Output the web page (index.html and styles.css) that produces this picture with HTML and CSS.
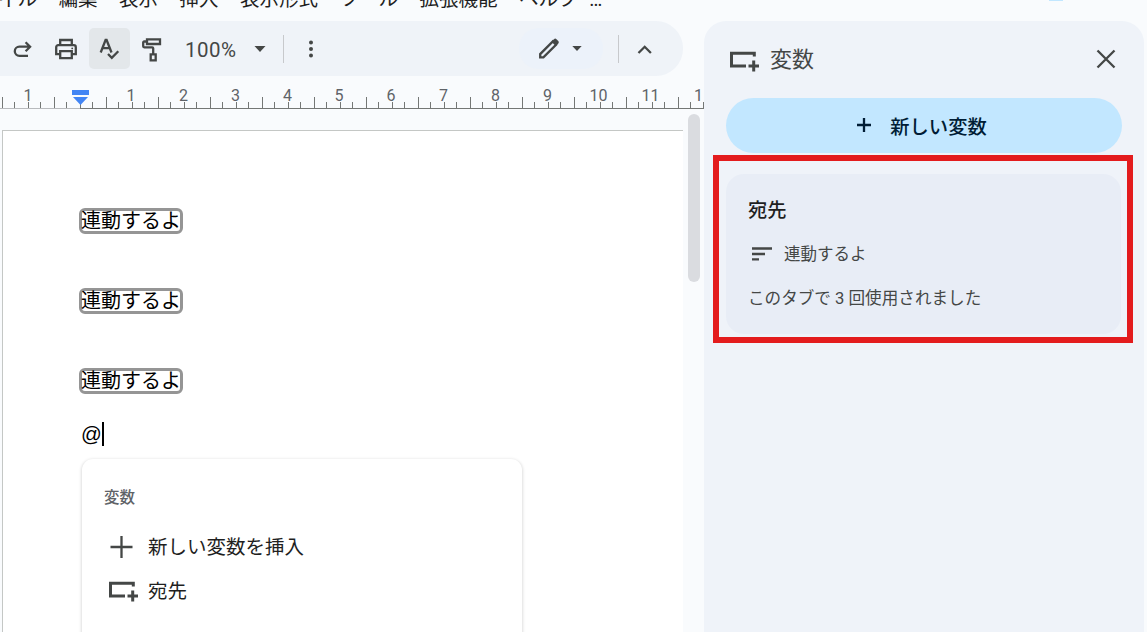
FILE: index.html
```html
<!DOCTYPE html>
<html lang="ja">
<head>
    <meta charset="UTF-8">
    <title>変数</title>
    <link rel="stylesheet" href="styles.css">
</head>
<body>
    <div class="editor">
        <div class="menubar">
            <span>ファイル</span>
            <span>編集</span>
            <span>表示</span>
            <span>挿入</span>
            <span>表示形式</span>
            <span>ツール</span>
            <span>拡張機能</span>
            <span>ヘルプ</span>
            <span class="more">…</span>
        </div>

        <div class="toolbar">
            <svg class="redo" width="20" height="20" viewBox="0 0 20 20">
                <path d="M17 6.700H6.400a4.600 4.600 0 0 0 0 9.200H15M12.600 2.200l4.500 4.500-4.500 4.500"/>
            </svg>
            <svg class="print" width="24" height="24" viewBox="0 0 24 24">
                <path d="M6.200 8V3h11.600v5M6 17.200H2.200v-7a2 2 0 0 1 2-2h15.600a2 2 0 0 1 2 2v7H18M6.200 14.200h11.600v7H6.200z"/>
                <circle class="dot" cx="18.200" cy="11.400" r="0.900"/>
            </svg>
            <div class="spell">
                <svg width="24" height="24" viewBox="0 0 24 24">
                    <path d="M3.700 15.500L8.600 3h1l4.900 12.500M5.500 11.200h7.200M11 17l3.800 3.800 6.500-6.500"/>
                </svg>
            </div>
            <svg class="paint" width="22" height="26" viewBox="0 0 22 26">
                <path d="M6 3.300h13V8H6zM6 5.500H3.200a1 1 0 0 0-1 1V10.300a1 1 0 0 0 1 1H11.200a1 1 0 0 1 1 1V18M9.700 18.300h5v6h-5z"/>
            </svg>
            <span class="zoom">100%</span>
            <svg class="caret" width="12" height="6" viewBox="0 0 12 6"><path d="M0.500 0h11L6 6z"/></svg>
            <span class="divider"></span>
            <svg class="dots" width="6" height="18" viewBox="0 0 6 18">
                <circle cx="3" cy="2.500" r="2"/>
                <circle cx="3" cy="9" r="2"/>
                <circle cx="3" cy="15.500" r="2"/>
            </svg>
            <div class="mode">
                <svg class="pencil" width="22" height="22" viewBox="0 0 22 22">
                    <path d="M2.200 19.300v-3.200L14.800 3.500l3.200 3.200L5.400 19.300z"/>
                    <path class="tip" d="M14 3.200l2-2a1.700 1.700 0 0 1 2.400 0l1.900 1.900a1.700 1.700 0 0 1 0 2.400l-2 2z"/>
                </svg>
                <svg class="caret" width="10" height="5" viewBox="0 0 10 5"><path d="M0.300 0h9.400L5 5z"/></svg>
            </div>
            <span class="divider"></span>
            <svg class="collapse" width="16" height="10" viewBox="0 0 16 10"><path d="M1.500 9L7.700 2.800 13.900 9"/></svg>
        </div>

        <svg class="ruler" width="704" height="33" viewBox="0 0 704 33">
            <defs>
                <pattern id="ticks" x="2" y="0" width="52" height="33" patternUnits="userSpaceOnUse">
                    <rect x="0" y="21" width="1" height="11"/>
                    <rect x="12" y="26" width="1" height="6"/>
                    <rect x="26" y="26" width="1" height="6"/>
                    <rect x="38" y="26" width="1" height="6"/>
                </pattern>
            </defs>
            <rect class="ticks" x="0" y="0" width="700" height="32"/>
            <rect class="margin-line" x="0" y="32" width="80" height="1"/>
            <rect x="80" y="32" width="624" height="1"/>
            <rect x="703" y="26" width="1" height="6"/>
            <text x="28" y="25">1</text>
            <text x="131" y="25">1</text>
            <text x="183.500" y="25">2</text>
            <text x="235.500" y="25">3</text>
            <text x="287.500" y="25">4</text>
            <text x="339" y="25">5</text>
            <text x="391" y="25">6</text>
            <text x="443.500" y="25">7</text>
            <text x="495.500" y="25">8</text>
            <text x="547.500" y="25">9</text>
            <text x="598.500" y="25">10</text>
            <text x="650.500" y="25">11</text>
            <text x="698.500" y="25">1</text>
            <path class="marker" d="M72 14h17v5H72zM73 21h15l-7.500 8z"/>
        </svg>

        <div class="canvas">
            <div class="page">
                <p><span class="chip">連動するよ</span></p>
                <p><span class="chip">連動するよ</span></p>
                <p><span class="chip">連動するよ</span></p>
                <div class="typing">@<span class="cursor"></span></div>
                <div class="popup">
                    <h4>変数</h4>
                    <div class="item">
                        <svg width="30" height="24" viewBox="0 0 30 24"><path d="M1.500 12h22M12.500 1v22"/></svg>
                        <span>新しい変数を挿入</span>
                    </div>
                    <div class="item">
                        <svg class="var-icon" width="30" height="24" viewBox="0 0 30 24"><path d="M24.300 8.500V5.200H1.500V18H16M18.500 18h10.500M23.700 12.500v11"/></svg>
                        <span>宛先</span>
                    </div>
                </div>
            </div>
            <div class="scrollbar"></div>
        </div>
    </div>

    <div class="side">
        <div class="avatar"></div>
        <div class="panel">
            <div class="panel-head">
                <svg class="var-icon" width="30" height="24" viewBox="0 0 30 24"><path d="M24.300 8.500V5.200H1.500V18H16M18.500 18h10.500M23.700 12.500v11"/></svg>
                <h2>変数</h2>
                <svg class="close" width="20" height="20" viewBox="0 0 20 20"><path d="M1.500 1.500l17 17M18.500 1.500l-17 17"/></svg>
            </div>
            <button class="new-var">
                <svg width="14" height="14" viewBox="0 0 14 14"><path d="M0 7h14M7 0v14"/></svg>
                新しい変数
            </button>
            <div class="highlight">
                <div class="card">
                    <h3>宛先</h3>
                    <div class="value">
                        <svg width="20" height="14" viewBox="0 0 20 14"><path d="M0 1.500h20M0 7h13M0 12.300h7"/></svg>
                        <span>連動するよ</span>
                    </div>
                    <div class="usage">このタブで 3 回使用されました</div>
                </div>
            </div>
        </div>
    </div>
</body>
</html>
```
FILE: styles.css
```css
* {
    box-sizing: border-box;
}
body {
    display: flex;
    margin: 0;
    height: 632px;
    overflow: hidden;
    background-color: #f9fbfd;
    font-family: Roboto, "Noto Sans CJK JP", sans-serif;
    color: #1f1f1f;
}
svg {
    flex: none;
    fill: none;
    stroke: #444746;
    stroke-width: 2.3;
}
h2, h3, h4, p {
    margin: 0;
    font-weight: 400;
}
.editor {
    display: flex;
    flex-direction: column;
    width: 704px;
    height: 632px;
    overflow: hidden;
}
.menubar {
    display: flex;
    align-items: flex-end;
    gap: 21.5px;
    height: 21px;
    margin-left: -41px;
    padding-bottom: 7px;
    overflow: hidden;
    font-size: 19.5px;
    line-height: 28px;
    white-space: nowrap;
    flex: none;
}
.menubar .more {
    margin-left: -10px;
}

/* toolbar */
.toolbar {
    display: flex;
    align-items: center;
    flex: none;
    width: 683px;
    height: 55px;
    padding-left: 13px;
    background-color: #eff3f8;
    border-radius: 0 27px 27px 0;
}
.redo {
    margin-top: 3px;
}
.print {
    margin-left: 21px;
}
.print .dot {
    fill: #444746;
    stroke: none;
}
.spell {
    display: flex;
    align-items: center;
    justify-content: center;
    width: 41px;
    height: 41px;
    margin-left: 11px;
    border-radius: 5px;
    background-color: #e3e7ea;
}
.spell svg {
    margin-right: 2px;
}
.paint {
    margin-left: 11px;
}
.zoom {
    width: 52px;
    margin: 2px 0 0 22px;
    font-size: 20.5px;
    letter-spacing: 0.5px;
    color: #444746;
}
.caret {
    fill: #444746;
    stroke: none;
    margin-left: 17px;
}
.divider {
    width: 1px;
    height: 28px;
    margin-left: 17px;
    background-color: #c7c9cc;
}
.dots {
    margin: 1px 0 0 24px;
    fill: #444746;
    stroke: none;
}
.mode {
    display: flex;
    align-items: center;
    width: 84px;
    height: 41px;
    margin-left: 205px;
    padding-left: 19px;
    border-radius: 20px;
    background-color: #ecf2fa;
}
.mode .caret {
    margin-left: 12px;
}
.mode + .divider {
    margin-left: 15px;
}
.pencil .tip {
    fill: #444746;
    stroke: none;
}
.collapse {
    margin-left: 18px;
}

/* ruler */
.ruler {
    fill: #747775;
    stroke: none;
}
.ruler text {
    font-size: 16px;
    fill: #5f6368;
    text-anchor: middle;
}
.ruler .ticks {
    fill: url(#ticks);
}
.ruler .margin-line {
    fill: #b8babd;
}
.ruler .marker {
    fill: #4285f4;
}

/* document */
.canvas {
    display: flex;
    flex: 1;
    padding-left: 2px;
}
.page {
    position: relative;
    width: 681px;
    height: 520px;
    margin-top: 21px;
    padding: 77px 0 0 76px;
    background-color: #fff;
    border-top: 1px solid #c4c7c5;
    border-left: 1px solid #c4c7c5;
}
.page p {
    display: flex;
    height: 80px;
}
.chip {
    width: 104px;
    height: 26px;
    border: 3px solid #959595;
    border-radius: 6px;
    font-size: 20px;
    line-height: 21px;
    color: #000;
    white-space: nowrap;
    text-indent: -1px;
}
.typing {
    display: flex;
    align-items: center;
    height: 24px;
    margin: -26px 0 0 2px;
    font-family: "Liberation Sans", sans-serif;
    font-size: 20.5px;
    color: #000;
}
.cursor {
    width: 2px;
    height: 24px;
    margin-left: 0;
    background-color: #000;
}
.popup {
    position: absolute;
    top: 328px;
    left: 79px;
    width: 440px;
    height: 220px;
    padding: 28px 22px;
    background-color: #fff;
    border-radius: 11px;
    box-shadow: 0 1px 3px 1px rgba(0, 0, 0, 0.13);
}
.popup h4 {
    font-size: 15.5px;
    line-height: 22px;
    font-weight: 500;
    color: #5f6368;
}
.popup .item {
    display: flex;
    align-items: center;
    gap: 9px;
    height: 44px;
    padding-left: 5px;
    font-size: 19.5px;
}
.popup .item span {
    padding-bottom: 3px;
}
.popup h4 + .item {
    margin-top: 16px;
}
.var-icon {
    stroke-width: 3;
}
.popup .var-icon {
    margin-bottom: 2px;
}
.scrollbar {
    width: 12px;
    height: 168px;
    margin: 5px 0 0 5px;
    border-radius: 6px;
    background-color: #dadce0;
}

/* side panel */
.side {
    display: flex;
    flex-direction: column;
    width: 440px;
}
.avatar {
    flex: none;
    width: 14px;
    height: 21px;
    margin-left: 345px;
    background: linear-gradient(#c2e7ff 1px, transparent 1px);
}
.panel {
    height: 640px;
    flex: none;
    padding: 0 22px;
    border-radius: 22px 22px 0 0;
    background-color: #eff3f9;
}
.panel-head {
    display: flex;
    align-items: center;
    height: 77px;
    padding-left: 4px;
}
.panel-head h2 {
    flex: 1;
    margin-left: 10px;
    padding-bottom: 5px;
    font-size: 22px;
    color: #444746;
}
.panel-head .close {
    margin: 0 6px 1px 0;
}
.new-var {
    display: flex;
    align-items: center;
    justify-content: center;
    gap: 19px;
    width: 396px;
    height: 55px;
    padding: 0 10px 0 6px;
    border: none;
    border-radius: 28px;
    background-color: #c2e7ff;
    color: #001d35;
    font: 500 19.3px Roboto, "Noto Sans CJK JP", sans-serif;
}
.new-var svg {
    margin-bottom: 2px;
    stroke: #001d35;
}
.highlight {
    width: 420px;
    height: 188px;
    margin: 2px 0 0 -13px;
    padding: 13px 6px 0 7px;
    border: 6px solid #e31b1d;
}
.card {
    height: 160px;
    padding: 21px 22px;
    border-radius: 18px;
    background-color: #e8edf6;
}
.card h3 {
    font-size: 19.3px;
    line-height: 32px;
    font-weight: 500;
}
.value {
    display: flex;
    align-items: center;
    gap: 12px;
    height: 24px;
    margin-top: 15px;
    padding-left: 4px;
    font-size: 16.5px;
    color: #444746;
}
.value span {
    padding-bottom: 2px;
}
.usage {
    margin-top: 21px;
    font-size: 16.6px;
    line-height: 24px;
    color: #444746;
}
```
